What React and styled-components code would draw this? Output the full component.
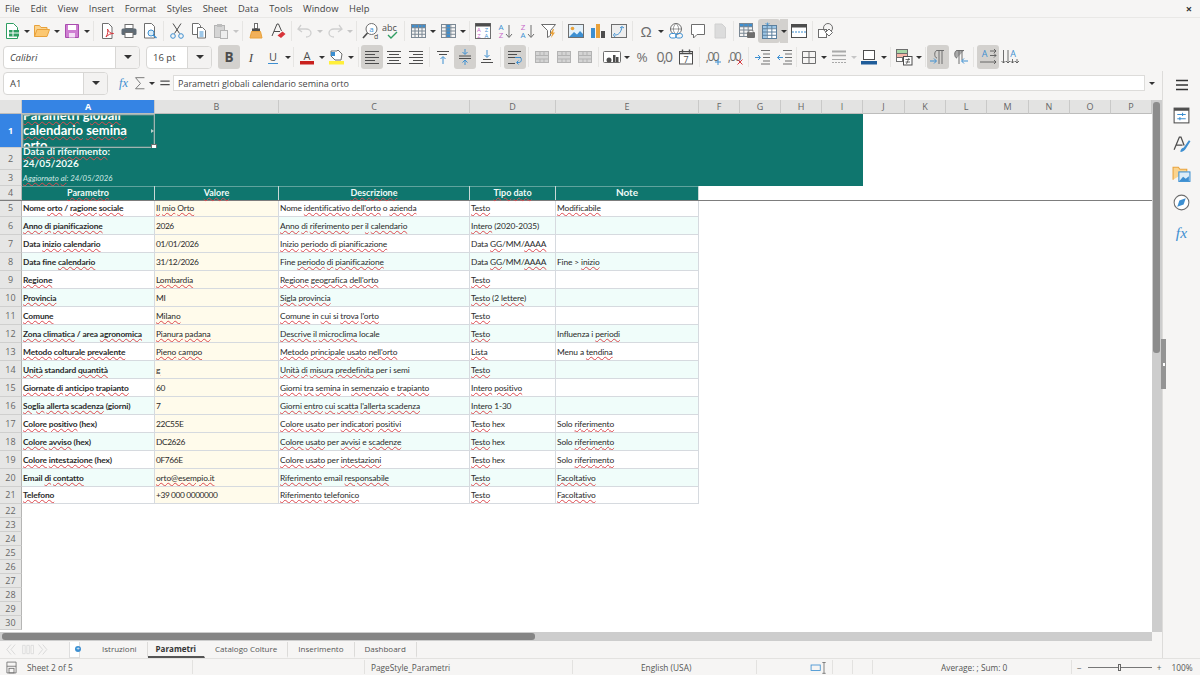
import React from 'react';
import styled, { createGlobalStyle } from 'styled-components';

const BLUE = '#3d8fd1';
const DARK = '#4d4d4d';
const GRAY = '#6e6e6e';
const PINK = '#c768c9';
const ORANGE = '#e9a23b';
const RED = '#d8343a';
const GREEN = '#2f9e62';

const COLUMNS = '22px 133px 124px 191px 86px 143px 41px 41px 41px 41px 42px 41px 41px 42px 41px 41px 41px';

const GlobalStyle = createGlobalStyle`
  html, body {
    margin: 0;
    height: 100%;
    overflow: hidden;
    background: #f6f5f4;
  }
`;

const Window = styled.div`
  width: 1200px;
  height: 675px;
  display: flex;
  flex-direction: column;
  overflow: hidden;
  background: #f6f5f4;
  color: #3d3d3d;
  font-family: "Open Sans", "Noto Sans", sans-serif;
  position: relative;
`;

const MenuBar = styled.div`
  height: 17px;
  display: flex;
  align-items: center;
  justify-content: space-between;
  padding: 0 8px 0 5px;
  border-bottom: 1px solid #e9e8e6;
`;

const MenuList = styled.div`
  display: flex;
  gap: 10.6px;
`;

const MenuItem = styled.span`
  font-size: 9.4px;
  color: #444;
`;

const CloseMark = styled.span`
  font-size: 11px;
  font-weight: 700;
  color: #333;
  line-height: 1;
`;

const Toolbar = styled.div`
  height: 26px;
  display: flex;
  align-items: center;
  padding-left: ${(p) => p.$left || 1}px;
`;

const ToolButton = styled.div`
  width: ${(p) => p.$w || 21.9}px;
  height: 24px;
  flex: none;
  display: flex;
  align-items: center;
  justify-content: center;
  border-radius: 3px;
  background: ${(p) => (p.$active ? '#d3d1ce' : 'transparent')};
`;

const DropArrow = styled.div`
  width: 8px;
  height: 24px;
  flex: none;
  margin-left: ${(p) => p.$gap || 0}px;
  display: flex;
  align-items: center;
  justify-content: center;
  background: ${(p) => (p.$active ? '#d3d1ce' : 'transparent')};
  &::after {
    content: '';
    border-left: 3px solid transparent;
    border-right: 3px solid transparent;
    border-top: 3px solid ${(p) => (p.$off ? '#c6c6c6' : '#333')};
  }
`;

const Separator = styled.div`
  width: ${(p) => p.$w || 5}px;
  height: 20px;
  flex: none;
  &::after {
    content: '';
    display: block;
    width: 1px;
    height: 20px;
    margin: 0 auto;
    background: #e6e5e3;
  }
`;

const Combo = styled.div`
  width: ${(p) => p.$w}px;
  height: 23px;
  flex: none;
  display: flex;
  margin-right: ${(p) => p.$gap || 0}px;
  border: 1px solid #d8d7d5;
  border-radius: 4px;
  box-sizing: border-box;
  overflow: hidden;
  background: #fff;
`;

const ComboText = styled.div`
  flex: 1;
  display: flex;
  align-items: center;
  padding-left: 6px;
  font-size: 9.5px;
  color: #444;
  font-style: ${(p) => (p.$italic ? 'italic' : 'normal')};
`;

const ComboArrow = styled.div`
  width: 23px;
  display: flex;
  align-items: center;
  justify-content: center;
  background: #f3f2f1;
  border-left: 1px solid #d8d7d5;
  &::after {
    content: '';
    border-left: 4px solid transparent;
    border-right: 4px solid transparent;
    border-top: 4px solid #333;
  }
`;

const Body = styled.div`
  flex: 1;
  min-height: 0;
  display: flex;
  border-top: 1px solid transparent;
`;

const Workspace = styled.div`
  width: 1162px;
  display: flex;
  flex-direction: column;
`;

const FormulaBar = styled.div`
  height: 29px;
  flex: none;
  display: flex;
  align-items: center;
  padding: 0 0 5px 3px;
  box-sizing: border-box;
`;

const FormulaInput = styled.div`
  width: 972px;
  height: 16px;
  flex: none;
  display: flex;
  align-items: center;
  padding-left: 4px;
  box-sizing: border-box;
  background: #fff;
  border: 1px solid #dddcda;
  font-size: 9px;
  color: #444;
`;

const SheetArea = styled.div`
  flex: 1;
  min-height: 0;
  display: flex;
`;

const Sheet = styled.div`
  width: 1152px;
  background: #fff;
  overflow: hidden;
  font-family: Lato, "Open Sans", sans-serif;
`;

const HeaderRow = styled.div`
  display: grid;
  grid-template-columns: ${COLUMNS};
  height: 14px;
  background: #e3e3e2;
`;

const ColumnHead = styled.div`
  display: flex;
  align-items: center;
  justify-content: center;
  font-family: "Open Sans", sans-serif;
  font-size: 9px;
  color: ${(p) => (p.$selected ? '#fff' : '#666')};
  font-weight: ${(p) => (p.$selected ? 700 : 400)};
  background: ${(p) => (p.$selected ? '#3584e4' : 'transparent')};
  border-right: 1px solid #c9c9c8;
  border-bottom: 1px solid #bdbdbc;
  box-sizing: border-box;
`;

const Row = styled.div`
  display: grid;
  grid-template-columns: ${COLUMNS};
  grid-template-rows: minmax(0, 1fr);
  height: ${(p) => p.$h}px;
  border-bottom: ${(p) => (p.$frozen ? '1.5px solid #7d7d7d' : 'none')};
  box-sizing: ${(p) => (p.$frozen ? 'content-box' : 'border-box')};
  margin-bottom: ${(p) => (p.$frozen ? '-1.5px' : '0')};
  position: relative;
  z-index: ${(p) => (p.$frozen ? 1 : 0)};
`;

const RowHead = styled.div`
  display: flex;
  align-items: center;
  justify-content: center;
  font-family: "Open Sans", sans-serif;
  font-size: 9px;
  color: ${(p) => (p.$selected ? '#fff' : '#666')};
  font-weight: ${(p) => (p.$selected ? 700 : 400)};
  background: ${(p) => (p.$selected ? '#3584e4' : '#e6e6e5')};
  border-right: 1px solid #b5b5b4;
  border-bottom: 1px solid #cfcfce;
  box-sizing: border-box;
`;

const BannerFill = styled.div`
  grid-column: span 8;
  background: #0f766e;
`;

const BannerCell = styled.div`
  height: 100%;
  background: #0f766e;
  color: ${(p) => p.$color || '#fff'};
  font-size: ${(p) => p.$size}px;
  font-weight: ${(p) => (p.$bold ? 700 : 400)};
  font-style: ${(p) => (p.$italic ? 'italic' : 'normal')};
  line-height: ${(p) => p.$line}px;
  padding: 0 0 ${(p) => p.$lift || 0}px 1px;
  box-sizing: border-box;
  display: flex;
  align-items: center;
  overflow: hidden;
`;

const BannerText = styled.div`
  width: 130px;
  flex: none;
`;

const SelectionWrap = styled.div`
  position: relative;
  height: 100%;
`;

const Selection = styled.div`
  position: absolute;
  inset: 0;
  border: 1px solid #9db5b1;
  box-shadow: inset 0 0 0 0.5px #6d8e8a;
`;

const OverflowMark = styled.div`
  position: absolute;
  right: 1px;
  top: 15px;
  border-left: 3px solid #b7cfcb;
  border-top: 2.5px solid transparent;
  border-bottom: 2.5px solid transparent;
`;

const FillHandle = styled.div`
  position: absolute;
  right: -2px;
  bottom: -2px;
  width: 4px;
  height: 4px;
  background: #fff;
  border: 1px solid #6b6b6b;
  z-index: 2;
`;

const HeadCell = styled.div`
  background: #0f766e;
  color: #eefaf7;
  font-size: ${(p) => p.$size || 9}px;
  font-weight: 700;
  display: flex;
  align-items: center;
  justify-content: center;
  padding-bottom: 2px;
  box-sizing: border-box;
  border-right: 1px solid #c9d8d6;
  box-shadow: inset 0 1px 0 #5fa39d;
  white-space: nowrap;
`;

const DataCell = styled.div`
  display: flex;
  align-items: center;
  padding: 1px 0 0 1px;
  font-size: 8.4px;
  letter-spacing: ${(p) => (p.$tight ? '-0.4px' : '-0.13px')};
  color: #2a2a2a;
  white-space: pre;
  overflow: hidden;
  background: ${(p) => (p.$value ? '#fffbeb' : p.$striped ? '#f0fdfa' : '#fff')};
  font-weight: ${(p) => (p.$bold ? 700 : 400)};
  border-right: 1px solid #d6dadf;
  border-bottom: 1px solid #d6dadf;
  box-sizing: border-box;
`;

const Misspelt = styled.span`
  text-decoration: underline wavy #dc4a50;
  text-decoration-thickness: 0.6px;
  text-underline-offset: 0.5px;
`;

const VerticalBar = styled.div`
  width: 10px;
  flex: none;
  background: #cdcdcd;
  padding: 2px 2px 0 1px;
  box-sizing: border-box;
`;

const VerticalThumb = styled.div`
  height: 251px;
  border-radius: 3px;
  background: #8c8c8c;
`;

const HorizontalBar = styled.div`
  height: 9px;
  flex: none;
  width: 1152px;
  background: #cdcdcd;
  padding: 1px 0 0 2px;
  box-sizing: border-box;
`;

const HorizontalThumb = styled.div`
  width: 533px;
  height: 7px;
  border-radius: 3px;
  background: #858585;
`;

const TabBar = styled.div`
  height: 17px;
  flex: none;
  display: flex;
  align-items: center;
  font-size: 8px;
  color: #555;
`;

const TabNav = styled.div`
  width: 66px;
  flex: none;
  display: flex;
  align-items: center;
  padding-left: 6px;
  box-sizing: border-box;
`;

const NewSheet = styled.div`
  width: 11px;
  height: 16px;
  margin: 0 12px 0 3px;
  flex: none;
  background: #fff;
  border: 1px solid #dedede;
  border-top: none;
  box-sizing: border-box;
  display: flex;
  align-items: center;
  justify-content: flex-end;
`;

const PlusDot = styled.div`
  width: 6px;
  height: 6px;
  margin-right: -2px;
  border-radius: 50%;
  background: ${BLUE};
  color: #fff;
  font-size: 6px;
  line-height: 6px;
  text-align: center;
`;

const Tab = styled.div`
  height: 16px;
  flex: none;
  padding: 0 ${(p) => p.$pad || 10}px;
  display: flex;
  align-items: center;
  font-weight: ${(p) => (p.$active ? 700 : 400)};
  color: ${(p) => (p.$active ? '#333' : '#555')};
  border-bottom: 2px solid ${(p) => (p.$active ? '#555' : 'transparent')};
  border-right: 1px solid ${(p) => (p.$active ? 'transparent' : '#dcdbd9')};
  box-sizing: border-box;
`;

const Sidebar = styled.div`
  width: 38px;
  flex: none;
  display: flex;
  flex-direction: column;
  align-items: center;
  padding-top: 2px;
  box-sizing: border-box;
  border-left: 1px solid #dddcda;
`;

const SideButton = styled.div`
  width: 28px;
  height: ${(p) => p.$h || 29}px;
  margin-bottom: ${(p) => p.$gap || 0}px;
  display: flex;
  align-items: center;
  justify-content: center;
  flex: none;
`;

const DeckHandle = styled.div`
  position: absolute;
  left: 1161px;
  top: 339px;
  width: 5px;
  height: 50px;
  background: #949494;
  display: flex;
  align-items: center;
  justify-content: center;
  &::after {
    content: '';
    width: 2px;
    height: 3px;
    background: #fff;
  }
`;

const StatusBar = styled.div`
  height: 17px;
  flex: none;
  display: flex;
  align-items: center;
  border-top: 1px solid #e3e2e0;
  box-sizing: border-box;
  font-size: 8.3px;
  color: #555;
`;

const StatusCell = styled.div`
  width: ${(p) => p.$w}px;
  flex: none;
  height: 14px;
  display: flex;
  align-items: center;
  justify-content: ${(p) => p.$align || 'flex-start'};
  padding-left: ${(p) => p.$pad || 0}px;
  padding-right: ${(p) => p.$padRight || 0}px;
  box-sizing: border-box;
  border-right: ${(p) => (p.$plain ? 'none' : '1px solid #e3e2e0')};
  white-space: nowrap;
`;

const StatusLabel = styled.span`
  margin-left: ${(p) => p.$gap || 0}px;
`;

const SliderTrack = styled.div`
  width: 64px;
  height: 1px;
  margin: 0 5px 0 6px;
  background: #777;
  display: flex;
  justify-content: center;
  align-items: center;
  &::after {
    content: '';
    width: 3px;
    height: 7px;
    background: #f6f5f4;
    border: 1px solid #666;
    box-sizing: border-box;
  }
`;

// everything in the toolbars is a small drawing on an 18 unit grid
const stack = (ys, spans, color = GRAY) =>
  ys.map((y, i) => <path key={i} d={`M${spans[i][0]} ${y}H${spans[i][1]}`} stroke={color} fill="none" />);

const gridLines = (x, y, w, h, nx, ny, color) => (
  <>
    <rect x={x + 0.5} y={y + 0.5} width={w} height={h} fill="none" stroke={color} />
    {Array.from({ length: nx - 1 }, (_, i) => (
      <path key={`v${i}`} d={`M${x + 0.5 + ((i + 1) * w) / nx} ${y}v${h}`} stroke={color} />
    ))}
    {Array.from({ length: ny - 1 }, (_, i) => (
      <path key={`h${i}`} d={`M${x} ${y + 0.5 + ((i + 1) * h) / ny}h${w}`} stroke={color} />
    ))}
  </>
);

const ALIGN_Y = [3.5, 6.5, 9.5, 12.5, 15.5];
const INDENT_Y = [2.5, 6, 9.5, 13, 16];
const INDENT_SPANS = [[7, 16], [9, 16], [9, 16], [9, 16], [7, 16]];

const icons = {
  new: (
    <>
      <path d="M3.5 1.5h7l4 4v11h-11z" fill="#fff" stroke={GREEN} />
      <rect x="6" y="8" width="10" height="6.5" fill={GREEN} />
      <path d="M6 11h10M10 8v6.5" stroke="#fff" />
    </>
  ),
  open: (
    <>
      <path d="M1.5 14.5v-11h5l1.5 2h6v2" fill="#fbd48e" stroke={ORANGE} />
      <path d="M1.5 14.5l2.5-7h12.5l-2.5 7z" fill="#fcc872" stroke={ORANGE} />
    </>
  ),
  save: (
    <>
      <path d="M2.5 2.5h13v13h-13z" fill="#cf7ed2" stroke="#a94cae" />
      <rect x="5" y="3" width="8" height="5" fill="#fff" />
      <rect x="6" y="11" width="6" height="4.5" fill="#f4dff5" />
    </>
  ),
  pdf: (
    <>
      <path d="M4.5 1.5h6l3.5 3.5v11.5h-9.5z" fill="#fff" stroke={GRAY} />
      <path d="M8 15c2-3 2-6 1.5-8 1 3 3 4.5 6 4.5-3 0-5 1-7.5 3.5z" fill="none" stroke={RED} />
    </>
  ),
  print: (
    <>
      <rect x="5" y="2.5" width="8" height="4" fill="#fff" stroke={GRAY} />
      <rect x="1.5" y="6.5" width="15" height="6.5" rx="1.5" fill="#5f6b75" />
      <rect x="5" y="10.5" width="8" height="5" fill="#fff" stroke={GRAY} />
    </>
  ),
  preview: (
    <>
      <path d="M3.5 1.5h7l3 3v11.5h-10z" fill="#fff" stroke={GRAY} />
      <circle cx="10" cy="11" r="3" fill="#dcedf8" stroke={BLUE} />
      <path d="M12 13l3.5 3" stroke={BLUE} strokeWidth="1.5" />
    </>
  ),
  cut: (
    <>
      <path d="M5 1.5l6.5 10M13 1.5l-6.5 10" stroke={DARK} fill="none" />
      <circle cx="5" cy="14" r="2.3" fill="none" stroke={BLUE} />
      <circle cx="13" cy="14" r="2.3" fill="none" stroke={BLUE} />
    </>
  ),
  copy: (
    <>
      <path d="M2.5 1.5h6l2 2v9h-8z" fill="#fff" stroke={GRAY} />
      <path d="M7.5 5.5h5l3 3v7.5h-8z" fill="#fff" stroke={GRAY} />
      <path d="M9.5 10h4M9.5 12h4M9.5 14h4" stroke={BLUE} />
    </>
  ),
  paste: (
    <>
      <rect x="2.5" y="3.5" width="10" height="12" fill="#d5d5d5" stroke="#b4b4b4" />
      <rect x="5" y="2" width="5" height="3" fill="#bdbdbd" />
      <rect x="8.5" y="8.5" width="7" height="8" fill="#eee" stroke="#b4b4b4" />
    </>
  ),
  clone: (
    <>
      <rect x="7.5" y="1.5" width="3" height="5" fill="#fff" stroke={GRAY} />
      <rect x="5" y="6.5" width="8" height="2.5" fill={DARK} />
      <path d="M4.5 9.5h9l1.5 6.5h-12z" fill="#f1b05a" stroke={ORANGE} />
    </>
  ),
  clear: (
    <>
      <path d="M3 14L8 2h1.5l3 7M5 9.5h6" fill="none" stroke={DARK} />
      <path d="M8.5 13.5l5-4 3 2.5-4.5 4z" fill={RED} />
    </>
  ),
  undo: <path d="M5 3L2 7l4 3M2.5 7H10c3 0 5 2 5 4s-2 4-5 4" fill="none" stroke="#cfcfcf" strokeWidth="1.3" />,
  redo: <path d="M13 3l3 4-4 3M15.5 7H8c-3 0-5 2-5 4s2 4 5 4" fill="none" stroke="#cfcfcf" strokeWidth="1.3" />,
  find: (
    <>
      <circle cx="10.5" cy="7" r="5.5" fill="#fff" stroke={GRAY} />
      <text x="10.5" y="10" fontSize="8" textAnchor="middle" fill={BLUE}>a</text>
      <path d="M6.5 11L2 16" stroke={DARK} strokeWidth="1.6" />
      <text x="13" y="17" fontSize="7" fill={DARK}>d</text>
    </>
  ),
  spell: (
    <>
      <text x="0" y="9" fontSize="9" fill={DARK}>abc</text>
      <path d="M6 13l3 3 6-6" fill="none" stroke={GREEN} strokeWidth="1.4" />
    </>
  ),
  rows: (
    <>
      <rect x="2" y="2" width="14" height="4" fill={BLUE} />
      {gridLines(2, 2, 14, 13, 4, 4, '#7b8894')}
    </>
  ),
  cols: (
    <>
      <rect x="7" y="2" width="4" height="13" fill={BLUE} />
      {gridLines(2, 2, 14, 13, 3, 4, '#7b8894')}
    </>
  ),
  sort: (
    <>
      <rect x="1.5" y="1.5" width="15" height="15" fill="#fff" stroke={GRAY} />
      <rect x="1.5" y="1.5" width="15" height="3" fill={DARK} />
      <text x="5" y="10" fontSize="6" textAnchor="middle" fill={PINK}>A</text>
      <text x="5" y="16" fontSize="6" textAnchor="middle" fill={PINK}>Z</text>
      <text x="12.5" y="10" fontSize="6" textAnchor="middle" fill={BLUE}>Z</text>
      <text x="12.5" y="16" fontSize="6" textAnchor="middle" fill={BLUE}>A</text>
    </>
  ),
  sortAsc: (
    <>
      <text x="5" y="8" fontSize="8" textAnchor="middle" fill={BLUE}>A</text>
      <text x="5" y="16" fontSize="8" textAnchor="middle" fill={PINK}>Z</text>
      <path d="M13 3v12M10 12l3 3.5 3-3.5" fill="none" stroke={GRAY} />
    </>
  ),
  sortDesc: (
    <>
      <text x="5" y="8" fontSize="8" textAnchor="middle" fill={PINK}>Z</text>
      <text x="5" y="16" fontSize="8" textAnchor="middle" fill={BLUE}>A</text>
      <path d="M13 3v12M10 12l3 3.5 3-3.5" fill="none" stroke={GRAY} />
    </>
  ),
  filter: (
    <>
      <path d="M1.5 2.5h14l-5 6v5l-3 2v-7z" fill="#fff" stroke={GRAY} />
      <path d="M13 7l-3 5h2l-1 4 4-5.5h-2l1-3.5z" fill={ORANGE} />
    </>
  ),
  image: (
    <>
      <rect x="1.5" y="2.5" width="15" height="13" fill="#e4f1fa" stroke={GRAY} />
      <circle cx="5.5" cy="6.5" r="1.8" fill={ORANGE} />
      <path d="M2 15l5-5 3 2.5 3-3.5 3 3v3z" fill={BLUE} />
    </>
  ),
  chart: (
    <>
      <rect x="2" y="6" width="4" height="10" fill={BLUE} />
      <rect x="7" y="2" width="4" height="14" fill={ORANGE} />
      <rect x="12" y="9" width="4" height="7" fill={DARK} />
    </>
  ),
  pivot: (
    <>
      <rect x="1.5" y="2.5" width="15" height="13" fill="#eee" stroke={GRAY} />
      <path d="M5 13c4 0 6-3 7-8M10 6l2-1.5L14 6M5 11l-1.5 2L5 15" fill="none" stroke={BLUE} />
    </>
  ),
  omega: <text x="9" y="14.5" fontSize="15" textAnchor="middle" fill={GRAY} fontFamily="Liberation Sans">Ω</text>,
  link: (
    <>
      <circle cx="9" cy="7" r="5.5" fill="#fff" stroke={GRAY} />
      <path d="M3.5 7h11M9 1.5c-3.5 3-3.5 8 0 11M9 1.5c3.5 3 3.5 8 0 11" fill="none" stroke={GRAY} strokeWidth="0.7" />
      <rect x="2.5" y="11.5" width="7" height="4.5" rx="2.2" fill="#fff" stroke={BLUE} />
      <rect x="8.5" y="11.5" width="7" height="4.5" rx="2.2" fill="none" stroke={BLUE} />
    </>
  ),
  comment: <path d="M2.5 2.5h13v10H8l-3.5 3.5v-3.5h-2z" fill="#fff" stroke={GRAY} />,
  page: <path d="M4 2h7l3.5 3.5V16H4z" fill="#dcdcdc" stroke="#d0d0d0" />,
  printArea: (
    <>
      <rect x="1" y="1" width="13" height="4" fill={BLUE} />
      {gridLines(1, 1, 13, 13, 3, 4, '#7b8894')}
      <rect x="9" y="10" width="8" height="6" rx="1" fill={GRAY} />
      <rect x="11" y="8.5" width="4" height="2" fill="#fff" stroke={GRAY} strokeWidth="0.6" />
    </>
  ),
  freeze: (
    <>
      <rect x="2" y="3" width="14" height="13" fill="#fff" />
      <rect x="2" y="3" width="14" height="3" fill="#9cc6e6" />
      <rect x="2" y="3" width="4.5" height="13" fill="#9cc6e6" />
      {gridLines(2, 3, 14, 13, 3, 4, '#5b7f9d')}
      <path d="M7.5 0.5v3M5.5 1l2 2 2-2" fill="none" stroke={BLUE} strokeWidth="0.8" />
    </>
  ),
  split: (
    <>
      <rect x="1.5" y="2.5" width="15" height="13" fill="#fff" stroke={DARK} />
      <rect x="1.5" y="2.5" width="15" height="3" fill={DARK} />
      <path d="M2 10h14" stroke={BLUE} strokeDasharray="2 1" />
    </>
  ),
  shapes: (
    <>
      <rect x="1.5" y="7.5" width="8" height="8" fill="#fff" stroke={GRAY} />
      <circle cx="11" cy="6" r="4.5" fill="none" stroke={GRAY} />
      <path d="M12 7l3.5 3.5-3.5 3.5-3.5-3.5z" fill="#fff" stroke={GRAY} />
    </>
  ),
  bold: <text x="9" y="14" fontSize="13.5" fontWeight="700" textAnchor="middle" fill={DARK} fontFamily="Open Sans">B</text>,
  italic: <text x="9" y="14" fontSize="13" fontStyle="italic" textAnchor="middle" fill={DARK} fontFamily="Liberation Serif">I</text>,
  underline: (
    <>
      <text x="9" y="12.5" fontSize="11" textAnchor="middle" fill={DARK} fontFamily="Open Sans">U</text>
      <path d="M4 15.5h10" stroke={BLUE} />
    </>
  ),
  fontColor: (
    <>
      <text x="9" y="11.5" fontSize="11" textAnchor="middle" fill={DARK} fontFamily="Open Sans">A</text>
      <rect x="2" y="13" width="14" height="3.5" fill="#c9211e" />
    </>
  ),
  highlight: (
    <>
      <path d="M3 3h6l1-1 4 4-1 6H7L3 8z" fill="#fff" stroke={GRAY} />
      <path d="M3 4h4v4H3z" fill={BLUE} />
      <rect x="1" y="13" width="15" height="3.5" fill="#ffef3a" />
    </>
  ),
  alignLeft: stack(ALIGN_Y, [[2, 16], [2, 12], [2, 16], [2, 12], [2, 16]], DARK),
  alignCenter: stack(ALIGN_Y, [[2, 16], [4, 14], [2, 16], [4, 14], [2, 16]], DARK),
  alignRight: stack(ALIGN_Y, [[2, 16], [6, 16], [2, 16], [6, 16], [2, 16]], DARK),
  vTop: (
    <>
      {stack([3.5, 6.5], [[3, 15], [5, 13]], DARK)}
      <path d="M9 16V9M6.5 11L9 8.5 11.5 11" fill="none" stroke={BLUE} />
    </>
  ),
  vCenter: (
    <>
      {stack([8, 10.5], [[3, 15], [3, 15]], DARK)}
      <path d="M9 1v5M6.5 4L9 6.5 11.5 4M9 17v-5M6.5 14.5L9 12l2.5 2.5" fill="none" stroke={BLUE} />
    </>
  ),
  vBottom: (
    <>
      {stack([11.5, 14.5], [[5, 13], [3, 15]], DARK)}
      <path d="M9 2v7M6.5 7L9 9.5 11.5 7" fill="none" stroke={BLUE} />
    </>
  ),
  wrap: (
    <>
      {stack([3.5, 6.5, 9.5, 15.5], [[2, 15], [2, 11], [2, 15], [2, 9]], DARK)}
      <path d="M9 9.5h5c2 0 2 5-1 5h-2M12.5 12.5L10.5 14.5l2 2" fill="none" stroke={BLUE} />
    </>
  ),
  merge: (
    <>
      <rect x="2.5" y="3.5" width="13" height="11" fill="#d4d4d4" stroke="#b3b3b3" />
      <path d="M2 7.5h14M2 11h14M7 4v3M11 4v3M7 11v3M11 11v3" stroke="#b3b3b3" />
    </>
  ),
  currency: (
    <>
      <rect x="0.5" y="3.5" width="17" height="11" rx="1" fill="#fff" stroke={GRAY} />
      <circle cx="6" cy="12" r="2.5" fill={DARK} />
      <rect x="10" y="7" width="2.5" height="7" fill={DARK} />
      <rect x="13" y="9" width="2.5" height="5" fill={DARK} />
    </>
  ),
  percent: <text x="9" y="14" fontSize="13.5" textAnchor="middle" fill={GRAY} fontFamily="Open Sans">%</text>,
  number: <text x="9" y="14" fontSize="14" textAnchor="middle" fill={GRAY} fontFamily="Open Sans" letterSpacing="-1.5">0,0</text>,
  date: (
    <>
      <rect x="2.5" y="3.5" width="13" height="12.5" fill="#fff" stroke={DARK} />
      <path d="M2 5.5h14M5.5 1.5v3M12.5 1.5v3" stroke={DARK} strokeWidth="1.4" />
      <text x="9" y="14.5" fontSize="9" textAnchor="middle" fill={DARK}>7</text>
    </>
  ),
  addDec: (
    <>
      <text x="8" y="12.5" fontSize="12" textAnchor="middle" fill={GRAY} fontFamily="Open Sans" letterSpacing="-1.5">,00</text>
      <path d="M14 11v6M11 14h6" stroke={BLUE} />
    </>
  ),
  delDec: (
    <>
      <text x="8" y="12.5" fontSize="12" textAnchor="middle" fill={GRAY} fontFamily="Open Sans" letterSpacing="-1.5">,00</text>
      <path d="M11.5 11.5l5 5M16.5 11.5l-5 5" stroke={RED} />
    </>
  ),
  indent: (
    <>
      {stack(INDENT_Y, INDENT_SPANS)}
      <path d="M1 9.5h5M4 7l2.5 2.5L4 12" fill="none" stroke={BLUE} />
    </>
  ),
  outdent: (
    <>
      {stack(INDENT_Y, INDENT_SPANS)}
      <path d="M7 9.5H1.5M4 7L1.5 9.5 4 12" fill="none" stroke={BLUE} />
    </>
  ),
  borders: <path d="M2.5 3.5h13v12h-13zM9 3.5v12M2.5 9.5h13" fill="none" stroke={GRAY} />,
  borderStyle: (
    <>
      <path d="M2 3.5h14" stroke="#a9a9a9" strokeWidth="2" />
      <path d="M2 7.5h14" stroke="#a9a9a9" strokeWidth="1.5" />
      <path d="M2 11.5h14" stroke="#a9a9a9" />
      <path d="M2 14.5h14" stroke="#a9a9a9" strokeDasharray="2 1" />
    </>
  ),
  borderColor: (
    <>
      <rect x="3.5" y="2.5" width="11" height="9" fill="#fff" stroke={DARK} />
      <rect x="1" y="13" width="16" height="3.5" fill="#1f5c99" />
    </>
  ),
  conditional: (
    <>
      <rect x="1.5" y="1.5" width="11" height="4" fill="#a8d8a8" stroke={GRAY} />
      <rect x="1.5" y="5.5" width="11" height="4" fill="#f5b5a8" stroke={GRAY} />
      <rect x="1.5" y="9.5" width="6" height="4" fill="#fff" stroke={GRAY} />
      <rect x="8.5" y="8.5" width="8.5" height="8.5" fill="#fff" stroke={DARK} />
      <path d="M10.5 11.5h4.5M10.5 14h4.5M14 10l-2.5 6" stroke={DARK} fill="none" strokeWidth="0.8" />
    </>
  ),
  paraLtr: (
    <>
      <path d="M8 10C5 10 5 2.5 8 2.5h7M10 2.5V16M13 2.5V16" fill="none" stroke={GRAY} />
      <path d="M1 13h6M5 10.5L7.5 13 5 15.5" fill="none" stroke={BLUE} />
    </>
  ),
  paraRtl: (
    <>
      <path d="M6 10C3 10 3 2.5 6 2.5h7M8 2.5V16M11 2.5V12" fill="#a9a9a9" stroke={GRAY} />
      <path d="M17 13h-6M13 10.5L10.5 13l2.5 2.5" fill="none" stroke={BLUE} />
    </>
  ),
  textLtr: (
    <>
      <text x="5.5" y="9" fontSize="9" textAnchor="middle" fill={BLUE}>A</text>
      <path d="M11 3h6M15 1l2 2-2 2M11 7.5h6M15 5.5l2 2-2 2M1 14h16M15 12l2 2-2 2" fill="none" stroke={DARK} strokeWidth="0.8" />
    </>
  ),
  textTtb: (
    <>
      <text x="12" y="9" fontSize="9" textAnchor="middle" fill={BLUE}>A</text>
      <path d="M2.5 2v13M.5 13l2 2 2-2M7 2v13M5 13l2 2 2-2M11.5 11v4M9.5 13l2 2 2-2M16 11v4M14 13l2 2 2-2" fill="none" stroke={DARK} strokeWidth="0.8" />
    </>
  ),
  fx: <text x="8.5" y="14" fontSize="14" fontStyle="italic" textAnchor="middle" fill={BLUE} fontFamily="Liberation Serif">fx</text>,
  sigma: <path d="M14 3H4l5.5 6.5L4 15.5h10" fill="none" stroke={GRAY} />,
  equals: <path d="M3 6.5h12M3 11h12" stroke={DARK} strokeWidth="1.7" />,
  menu: <path d="M3 4.5h12M3 9h12M3 13.5h12" stroke="#333" strokeWidth="1.5" />,
  properties: (
    <>
      <rect x="2" y="2" width="14" height="14" fill="#fff" stroke={DARK} />
      <rect x="2" y="2" width="14" height="2.5" fill={DARK} />
      <path d="M5 8h8M5 12h8" stroke={BLUE} />
      <path d="M10 6.5v3M7.5 10.5v3" stroke={BLUE} />
    </>
  ),
  styles: (
    <>
      <path d="M2 14L7 2h1.5l3 8M4 9.5h6" fill="none" stroke={DARK} strokeWidth="1.2" />
      <path d="M8 16c0-3 2-4 3-4l5-7 1.5 1-4.5 7c-1 1.5-3 3-5 3z" fill={BLUE} />
    </>
  ),
  gallery: (
    <>
      <path d="M1 15V3h5l1.5 2H14v2" fill="#fbd48e" stroke={ORANGE} />
      <rect x="6.5" y="7.5" width="10.5" height="9" fill="#dcedf8" stroke={BLUE} />
      <path d="M7 16l3.5-4 2.5 2 3-2.5V16z" fill={BLUE} />
    </>
  ),
  navigator: (
    <>
      <circle cx="9" cy="9" r="7" fill="#fff" stroke={GRAY} />
      <path d="M13 5l-2 6-6 2 2-6z" fill={BLUE} />
    </>
  ),
  tabNav: <path d="M6 3L1 9l5 6M11 3L6 9l5 6" fill="none" stroke="#d5d5d5" />,
  tabNavEnd: <path d="M3 3l5 6-5 6M8 3l5 6-5 6" fill="none" stroke="#d5d5d5" />,
  tabBox: <path d="M2 4h3v10H2zM7 4h3v10H7zM12 4h3v10h-3z" fill="none" stroke="#dadada" />,
  saveStatus: (
    <>
      <path d="M3.5 2.5h11v13h-11z" fill="none" stroke={GRAY} />
      <rect x="6" y="10" width="6" height="5.5" fill="none" stroke={GRAY} />
      <path d="M3.5 7.5h11" stroke={GRAY} />
    </>
  ),
  selection: (
    <>
      <rect x="0.5" y="6" width="11" height="6.5" fill="none" stroke={BLUE} />
      <path d="M16 3v13M14 3h4M14 16h4" stroke={GRAY} fill="none" />
    </>
  ),
};

const Icon = ({ name, size = 18, wide }) => (
  <svg width={wide ? 20 : size} height={size} viewBox={wide ? '0 0 20 18' : '0 0 18 18'}>
    {icons[name]}
  </svg>
);

const TOP_TOOLS = [
  ['new', 'drop'], ['open', 'drop'], ['save', 'drop'], '|',
  'pdf', 'print', 'preview', '|',
  'cut', 'copy', ['paste', 'off'], '|',
  'clone', 'clear', '|',
  ['undo', 'off'], ['redo', 'off'], '|',
  'find', 'spell', '|',
  ['rows', 'drop'], ['cols', 'drop'], '|',
  'sort', 'sortAsc', 'sortDesc', 'filter', '|',
  'image', 'chart', 'pivot', '|',
  ['omega', 'drop'], 'link', 'comment', 'page', '|',
  'printArea', ['freeze', 'activeDrop'], 'split', '|',
  'shapes',
];

const FORMAT_TOOLS = [
  '*bold', 'italic', ['underline', 'drop'], '|4', ['fontColor', 'drop'], ['highlight', 'drop'], '|6',
  '*alignLeft', 'alignCenter', 'alignRight', '|5',
  'vTop', '*vCenter', 'vBottom', '|6',
  '*wrap', '|5', 'merge', 'merge', 'merge', '|5',
  ['currency', 'drop'], 'percent', 'number', 'date', '|5',
  'addDec', 'delDec', '|6',
  'indent', 'outdent', '|3',
  ['borders', 'drop'], ['borderStyle', 'off'], ['borderColor', 'drop'], '|5',
  ['conditional', 'drop'], '|4',
  '*paraLtr', 'paraRtl', '|6',
  '*textLtr', 'textTtb',
];

const ToolSet = ({ tools }) =>
  tools.map((tool, i) => {
    if (typeof tool === 'string' && tool[0] === '|') {
      return <Separator key={i} $w={Number(tool.slice(1)) || 5} />;
    }
    const [raw, drop] = Array.isArray(tool) ? tool : [tool];
    const active = raw[0] === '*' || drop === 'activeDrop';
    const name = raw.replace('*', '');
    return (
      <React.Fragment key={i}>
        <ToolButton $active={active}>
          <Icon name={name} />
        </ToolButton>
        {drop && <DropArrow $off={drop === 'off'} $active={drop === 'activeDrop'} />}
      </React.Fragment>
    );
  });

// words in [brackets] carry the spell checker's red wave
const Spelled = ({ text }) => (
  <span>
    {text
      .split(/(\[[^\]]+\])/)
      .filter(Boolean)
      .map((part, i) =>
        part[0] === '[' ? <Misspelt key={i}>{part.slice(1, -1)}</Misspelt> : <span key={i}>{part}</span>,
      )}
  </span>
);

const ROWS = [
  ['Nome [orto] / [ragione] [sociale]', '[Il] [mio] [Orto]', "Nome [identificativo] [dell'orto] o [azienda]", '[Testo]', '[Modificabile]'],
  ['[Anno] [di] [pianificazione]', '2026', '[Anno] [di] [riferimento] per [il] [calendario]', '[Intero] (2020-2035)', ''],
  ['Data [inizio] [calendario]', '01/01/2026', '[Inizio] [periodo] [di] [pianificazione]', 'Data [GG]/MM/[AAAA]', ''],
  ['Data fine [calendario]', '31/12/2026', 'Fine [periodo] [di] [pianificazione]', 'Data [GG]/MM/[AAAA]', 'Fine > [inizio]'],
  ['[Regione]', '[Lombardia]', "[Regione] [geografica] [dell'orto]", '[Testo]', ''],
  ['[Provincia]', 'MI', '[Sigla] [provincia]', '[Testo] (2 [lettere])', ''],
  ['[Comune]', '[Milano]', "[Comune] in [cui] si [trova] [l'orto]", '[Testo]', ''],
  ['[Zona] [climatica] / area [agronomica]', '[Pianura] [padana]', '[Descrive] [il] [microclima] locale', '[Testo]', 'Influenza i [periodi]'],
  ['[Metodo] [colturale] [prevalente]', '[Pieno] [campo]', "[Metodo] [principale] [usato] [nell'orto]", '[Lista]', 'Menu a [tendina]'],
  ['[Unità] standard [quantità]', '[g]', '[Unità] [di] [misura] [predefinita] per i semi', '[Testo]', ''],
  ['[Giornate] [di] [anticipo] [trapianto]', '60', '[Giorni] [tra] [semina] in [semenzaio] e [trapianto]', '[Intero] [positivo]', ''],
  ['[Soglia] [allerta] [scadenza] (giorni)', '7', "[Giorni] [entro] [cui] [scatta] [l'allerta] [scadenza]", '[Intero] 1-30', ''],
  ['[Colore] [positivo] (hex)', '22C55E', '[Colore] [usato] per [indicatori] [positivi]', '[Testo] hex', 'Solo [riferimento]'],
  ['[Colore] [avviso] (hex)', 'DC2626', '[Colore] [usato] per [avvisi] e [scadenze]', '[Testo] hex', 'Solo [riferimento]'],
  ['[Colore] [intestazione] (hex)', '0F766E', '[Colore] [usato] per [intestazioni]', '[Testo] hex', 'Solo [riferimento]'],
  ['Email [di] [contatto]', '[orto@esempio.it]', '[Riferimento] email [responsabile]', '[Testo]', '[Facoltativo]'],
  ['[Telefono]', '+39 000 0000000', '[Riferimento] [telefonico]', '[Testo]', '[Facoltativo]'],
];

const LETTERS = 'ABCDEFGHIJKLMNOP'.split('');
const EMPTY_ROWS = [22, 23, 24, 25, 26, 27, 28, 29, 30];
const MENUS = ['File', 'Edit', 'View', 'Insert', 'Format', 'Styles', 'Sheet', 'Data', 'Tools', 'Window', 'Help'];
const SIDE_ICONS = ['properties', 'styles', 'gallery', 'navigator', 'fx'];

const App = () => {
  return (
    <Window>
      <GlobalStyle />
      <MenuBar>
        <MenuList>
          {MENUS.map((m) => (
            <MenuItem key={m}>{m}</MenuItem>
          ))}
        </MenuList>
        <CloseMark>×</CloseMark>
      </MenuBar>
      <Toolbar>
        <ToolSet tools={TOP_TOOLS} />
      </Toolbar>
      <Toolbar $left={3}>
        <Combo $w={137} $gap={6}>
          <ComboText $italic>Calibri</ComboText>
          <ComboArrow />
        </Combo>
        <Combo $w={66} $gap={6}>
          <ComboText>16 pt</ComboText>
          <ComboArrow />
        </Combo>
        <ToolSet tools={FORMAT_TOOLS} />
      </Toolbar>
      <Body>
        <Workspace>
          <FormulaBar>
            <Combo $w={105} $gap={8}>
              <ComboText>A1</ComboText>
              <ComboArrow />
            </Combo>
            <ToolButton $w={16}>
              <Icon name="fx" size={16} />
            </ToolButton>
            <ToolButton $w={16}>
              <Icon name="sigma" size={16} />
            </ToolButton>
            <DropArrow />
            <ToolButton $w={17}>
              <Icon name="equals" size={14} />
            </ToolButton>
            <FormulaInput>Parametri globali calendario semina orto</FormulaInput>
            <DropArrow $gap={3} />
          </FormulaBar>
          <SheetArea>
            <Sheet>
              <HeaderRow>
                <ColumnHead />
                {LETTERS.map((l) => (
                  <ColumnHead key={l} $selected={l === 'A'}>
                    {l}
                  </ColumnHead>
                ))}
              </HeaderRow>
              <Row $h={34}>
                <RowHead $selected>1</RowHead>
                <SelectionWrap>
                  <BannerCell $size={13} $line={15} $lift={2} $bold>
                    <BannerText>
                      <Spelled text="[Parametri] [globali] [calendario] [semina] [orto]" />
                    </BannerText>
                  </BannerCell>
                  <Selection />
                  <OverflowMark />
                  <FillHandle />
                </SelectionWrap>
                <BannerFill />
              </Row>
              <Row $h={22}>
                <RowHead>2</RowHead>
                <BannerCell $size={10} $line={11.5} $lift={3} $bold $color="#eefaf7">
                  <BannerText>
                    <Spelled text="[Data] [di] [riferimento]: 24/05/2026" />
                  </BannerText>
                </BannerCell>
                <BannerFill />
              </Row>
              <Row $h={16}>
                <RowHead>3</RowHead>
                <BannerCell $size={7.8} $line={10} $italic $color="#cfe8e4">
                  <BannerText>
                    <Spelled text="[Aggiornato] [al]: 24/05/2026" />
                  </BannerText>
                </BannerCell>
                <BannerFill />
              </Row>
              <Row $h={14} $frozen>
                <RowHead>4</RowHead>
                <HeadCell>
                  <Spelled text="[Parametro]" />
                </HeadCell>
                <HeadCell>
                  <Spelled text="[Valore]" />
                </HeadCell>
                <HeadCell>
                  <Spelled text="[Descrizione]" />
                </HeadCell>
                <HeadCell>
                  <Spelled text="[Tipo] [dato]" />
                </HeadCell>
                <HeadCell $size={10}>Note</HeadCell>
              </Row>
              {ROWS.map((cells, i) => (
                <Row key={i} $h={17.95}>
                  <RowHead>{i + 5}</RowHead>
                  {cells.map((text, c) => (
                    <DataCell
                      key={c}
                      $bold={c === 0}
                      $value={c === 1}
                      $striped={i % 2 === 1}
                      $tight={c === 1 && !text.includes('[')}
                    >
                      <Spelled text={text} />
                    </DataCell>
                  ))}
                </Row>
              ))}
              {EMPTY_ROWS.map((n) => (
                <Row key={n} $h={14}>
                  <RowHead>{n}</RowHead>
                </Row>
              ))}
            </Sheet>
            <VerticalBar>
              <VerticalThumb />
            </VerticalBar>
          </SheetArea>
          <HorizontalBar>
            <HorizontalThumb />
          </HorizontalBar>
          <TabBar>
            <TabNav>
              <Icon name="tabNav" size={15} />
              <Icon name="tabBox" size={15} />
              <Icon name="tabNavEnd" size={15} />
            </TabNav>
            <NewSheet>
              <PlusDot>+</PlusDot>
            </NewSheet>
            <Tab $pad={10}>Istruzioni</Tab>
            <Tab $active $pad={8}>Parametri</Tab>
            <Tab $pad={10}>Catalogo Colture</Tab>
            <Tab $pad={10}>Inserimento</Tab>
            <Tab $pad={10}>Dashboard</Tab>
          </TabBar>
        </Workspace>
        <Sidebar>
          <SideButton $h={23} $gap={5}>
            <Icon name="menu" />
          </SideButton>
          {SIDE_ICONS.map((name) => (
            <SideButton key={name}>
              <Icon name={name} size={name === 'fx' ? 20 : 19} />
            </SideButton>
          ))}
        </Sidebar>
      </Body>
      <DeckHandle />
      <StatusBar>
        <StatusCell $w={193} $pad={4}>
          <Icon name="saveStatus" size={15} />
          <StatusLabel $gap={8}>Sheet 2 of 5</StatusLabel>
        </StatusCell>
        <StatusCell $w={172} />
        <StatusCell $w={208} $pad={6}>PageStyle_Parametri</StatusCell>
        <StatusCell $w={184} $pad={68}>English (USA)</StatusCell>
        <StatusCell $w={76} $align="flex-end" $padRight={3}>
          <Icon name="selection" wide size={15} />
        </StatusCell>
        <StatusCell $w={20} />
        <StatusCell $w={20} />
        <StatusCell $w={199} $pad={68}>Average: ; Sum: 0</StatusCell>
        <StatusCell $w={128} $plain $pad={5}>
          <span>−</span>
          <SliderTrack />
          <span>+</span>
          <StatusLabel $gap={10}>100%</StatusLabel>
        </StatusCell>
      </StatusBar>
    </Window>
  );
};

export default App;
